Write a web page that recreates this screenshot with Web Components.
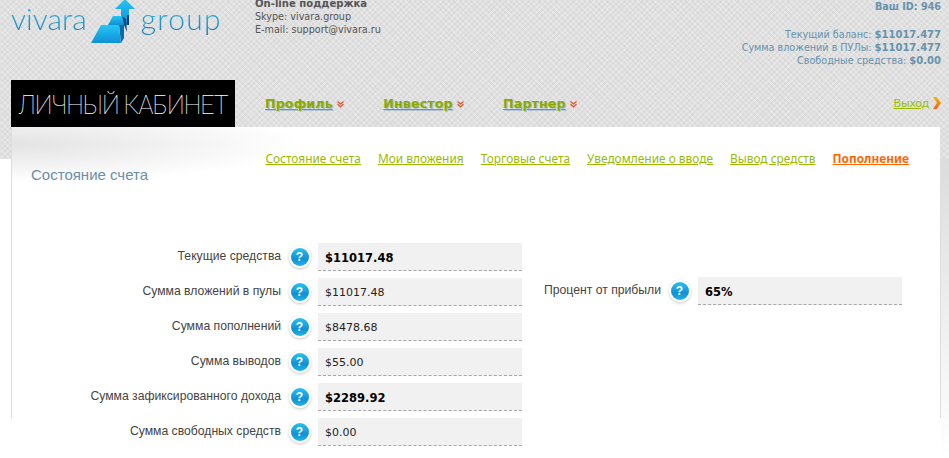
<!DOCTYPE html>
<html lang="ru">
<head>
<meta charset="utf-8">
<title>Vivara Group</title>
<style>
    html, body { margin: 0; background: #ffffff; height: 100%; overflow: hidden; }
</style>
</head>
<body>
<vivara-page>
    <vivara-header></vivara-header>
    <vivara-card>
        <stat-row slot="left" label="Текущие средства" value="$11017.48" strong></stat-row>
        <stat-row slot="left" label="Сумма вложений в пулы" value="$11017.48"></stat-row>
        <stat-row slot="left" label="Сумма пополнений" value="$8478.68"></stat-row>
        <stat-row slot="left" label="Сумма выводов" value="$55.00"></stat-row>
        <stat-row slot="left" label="Сумма зафиксированного дохода" value="$2289.92" strong></stat-row>
        <stat-row slot="left" label="Сумма свободных средств" value="$0.00"></stat-row>
        <stat-row slot="right" label="Процент от прибыли" value="65%" strong></stat-row>
    </vivara-card>
</vivara-page>

<script>
const chevronDown = `
    <svg width="7" height="7" viewBox="0 0 7 7">
        <path d="M0.5 0.5 L3.5 3 L6.5 0.5 M0.5 3 L3.5 6 L6.5 3" fill="none" stroke="#e8522a" stroke-width="1.2"/>
    </svg>`;

class VivaraPage extends HTMLElement {
    constructor() {
        super();
        this.attachShadow({ mode: 'open' });
        this.shadowRoot.innerHTML = `
            <style>
                :host {
                    display: block;
                    width: 949px;
                    height: 458px;
                    overflow: hidden;
                    background: linear-gradient(#dcdcdc, #ffffff) no-repeat right 0 top 159px / 8px 299px;
                }
            </style>
            <slot></slot>
        `;
    }
}

class VivaraHeader extends HTMLElement {
    constructor() {
        super();
        this.attachShadow({ mode: 'open' });
        this.shadowRoot.innerHTML = `
            <style>
                :host {
                    display: block;
                    height: 159px;
                    background-color: #e7e7e7;
                    background-image:
                        repeating-linear-gradient(45deg, rgba(0,0,0,0.03) 0 2px, transparent 2px 4px),
                        repeating-linear-gradient(-45deg, rgba(0,0,0,0.03) 0 2px, transparent 2px 4px);
                }
                .top {
                    display: flex;
                    height: 80px;
                    padding: 0 8px 0 11px;
                }
                .logo {
                    display: flex;
                    width: 244px;
                    height: 46px;
                    font: 300 30px/36px Lato, sans-serif;
                }
                .logo span {
                    display: block;
                    height: 46px;
                    background: linear-gradient(#1fb7ea 20%, #1a78b4 75%);
                    -webkit-background-clip: text;
                    background-clip: text;
                    color: transparent;
                }
                .logo span + svg + span { letter-spacing: 1.2px; }
                .logo svg { margin: 0 0 0 2px; flex: none; }
                .support {
                    font: 10.7px/13px "DejaVu Sans Condensed", "DejaVu Sans", sans-serif;
                    font-stretch: condensed;
                    color: #555555;
                    margin-top: -3px;
                }
                .support b { display: block; font-size: 11.2px; }
                .balance {
                    margin-left: auto;
                    text-align: right;
                    font: 10.7px/13px "DejaVu Sans Condensed", "DejaVu Sans", sans-serif;
                    font-stretch: condensed;
                    color: #6593ad;
                }
                .balance b { font: bold 10px/13px "DejaVu Sans", sans-serif; }
                .balance .id { margin-bottom: 15px; }
                .balance .id b { font-size: 9.6px; }
                .nav {
                    display: flex;
                    align-items: center;
                    height: 47px;
                    padding: 0 8px 0 11px;
                }
                .cabinet {
                    width: 224px;
                    height: 47px;
                    background: #000000;
                    color: #ffffff;
                    font: 100 25px/51px Roboto, sans-serif;
                    letter-spacing: -1px;
                    text-align: center;
                    white-space: nowrap;
                }
                .menu { display: flex; gap: 39.5px; margin-left: 30px; }
                .menu a {
                    font: bold 12.8px/18px "DejaVu Sans", sans-serif;
                    color: #8aa800;
                    text-shadow: 1px 1px 0 rgba(90,140,180,0.35);
                    text-decoration: underline;
                }
                .menu svg { margin: 2px 0 0 4px; }
                .menu span { display: flex; align-items: center; }
                .logout {
                    margin-left: auto;
                    margin-top: -2px;
                    display: flex;
                    align-items: center;
                    gap: 4px;
                    font: 11.5px/14px "Noto Sans", sans-serif;
                }
                .logout a { color: #99bb00; text-decoration: underline; }
            </style>
            <div class="top">
                <div class="logo">
                    <span>vivara</span>
                    <svg width="52" height="46" viewBox="88 0 52 46">
                        <defs>
                            <linearGradient id="g" x1="0" y1="0" x2="0" y2="1">
                                <stop offset="0" stop-color="#25c6f5"/>
                                <stop offset="1" stop-color="#0e90d6"/>
                            </linearGradient>
                        </defs>
                        <path d="M124 -1 L134 9 L128 9 L128 25 L120 25 L120 9 L114 9 Z" fill="url(#g)"/>
                        <path d="M126 15 L128 15 L128 25 L126 25 Z" fill="#0b3f73"/>
                        <path d="M121 16 L125 19 L126 32 L123 25 Z" fill="#0c4a80"/>
                        <path d="M112 16 L121 16 L123 25 L107 25 Z" fill="url(#g)"/>
                        <path d="M118 25 L123 25 L123 38 L120 43 Z" fill="#0b6aa8"/>
                        <path d="M100 25 L118 25 L120 43 L90 43 Z" fill="url(#g)"/>
                    </svg>
                    <span>group</span>
                </div>
                <div class="support">
                    <b>On-line поддержка</b>
                    Skype: vivara.group<br>
                    E-mail: support@vivara.ru
                </div>
                <div class="balance">
                    <div class="id"><b>Ваш ID: 946</b></div>
                    Текущий баланс: <b>$11017.477</b><br>
                    Сумма вложений в ПУЛы: <b>$11017.477</b><br>
                    Свободные средства: <b>$0.00</b>
                </div>
            </div>
            <div class="nav">
                <div class="cabinet">ЛИЧНЫЙ КАБИНЕТ</div>
                <div class="menu">
                    <span><a>Профиль</a>${chevronDown}</span>
                    <span><a>Инвестор</a>${chevronDown}</span>
                    <span><a>Партнер</a>${chevronDown}</span>
                </div>
                <div class="logout">
                    <a>Выход</a>
                    <svg width="8" height="12" viewBox="0 0 8 12">
                        <defs>
                            <linearGradient id="o" x1="0" y1="0" x2="0" y2="1">
                                <stop offset="0" stop-color="#f5b800"/>
                                <stop offset="1" stop-color="#ff5a10"/>
                            </linearGradient>
                        </defs>
                        <path d="M0 0 L3.5 0 L8 6 L3.5 12 L0 12 L4 6 Z" fill="url(#o)"/>
                    </svg>
                </div>
            </div>
        `;
    }
}

class VivaraCard extends HTMLElement {
    constructor() {
        super();
        this.attachShadow({ mode: 'open' });
        this.shadowRoot.innerHTML = `
            <style>
                :host {
                    display: block;
                    box-sizing: border-box;
                    position: relative;
                    width: 930px;
                    height: 291px;
                    margin: -32px 0 0 11px;
                    border-left: 1px solid #dedede;
                    border-right: 1px solid #dedede;
                    background:
                        radial-gradient(ellipse 290px 38px at 0 17px, #e3e3e3, rgba(255,255,255,0)),
                        #ffffff;
                }
                .head {
                    display: flex;
                    justify-content: space-between;
                    height: 116px;
                    padding: 0 31px 0 19px;
                }
                h1 {
                    margin: 39px 0 0;
                    font: 15px/18px "Liberation Sans", sans-serif;
                    color: #6a8fa8;
                }
                nav {
                    display: flex;
                    gap: 17px;
                    margin-top: 23px;
                    height: 16px;
                    font: 11.9px/16px "Noto Sans", sans-serif;
                }
                nav a { color: #99bb00; text-decoration: underline; white-space: nowrap; }
                nav a.on { color: #ff6600; font-weight: bold; }
                .cols { display: flex; }
                .left { display: flex; flex-direction: column; gap: 7px; width: 510px; --label: 269px; }
                .right { display: flex; flex-direction: column; margin-top: 34px; --label: 139px; }
            </style>
            <div class="head">
                <h1>Состояние счета</h1>
                <nav>
                    <a>Состояние счета</a>
                    <a>Мои вложения</a>
                    <a>Торговые счета</a>
                    <a>Уведомление о вводе</a>
                    <a>Вывод средств</a>
                    <a class="on">Пополнение</a>
                </nav>
            </div>
            <div class="cols">
                <div class="left"><slot name="left"></slot></div>
                <div class="right"><slot name="right"></slot></div>
            </div>
        `;
    }
}

class StatRow extends HTMLElement {
    constructor() {
        super();
        this.attachShadow({ mode: 'open' });
    }

    connectedCallback() {
        const label = this.getAttribute('label');
        const value = this.getAttribute('value');
        const strong = this.hasAttribute('strong');
        this.shadowRoot.innerHTML = `
            <style>
                :host {
                    display: grid;
                    grid-template-columns: var(--label) 37px 204px;
                    align-items: center;
                    height: 28px;
                }
                .label {
                    text-align: right;
                    font: 12.2px/14px "Liberation Sans", sans-serif;
                    color: #444444;
                    margin-top: -3px;
                    white-space: nowrap;
                }
                .help {
                    justify-self: center;
                    box-sizing: border-box;
                    width: 18px;
                    height: 18px;
                    margin-top: -1px;
                    border-radius: 50%;
                    background: linear-gradient(#27c3f2 0%, #1596d8 55%, #0f8fd2 60%, #22b4e6 100%);
                    box-shadow: 0 0 0 2px #ffffff, 0 1px 3px 2px rgba(0,0,0,0.22);
                    color: #ffffff;
                    font: bold 12px/18px "Liberation Sans", sans-serif;
                    text-align: center;
                }
                .value {
                    box-sizing: border-box;
                    height: 28px;
                    padding: 0 7px;
                    background: #f1f1f1;
                    border-bottom: 1px dashed #a8a8a8;
                    color: #222222;
                    font: 11px/30px "DejaVu Sans", sans-serif;
                }
                .value.strong { font-weight: bold; font-size: 11.5px; color: #000000; }
            </style>
            <div class="label">${label}</div>
            <div class="help">?</div>
            <div class="value${strong ? ' strong' : ''}">${value}</div>
        `;
    }
}

customElements.define('vivara-page', VivaraPage);
customElements.define('vivara-header', VivaraHeader);
customElements.define('vivara-card', VivaraCard);
customElements.define('stat-row', StatRow);
</script>
</body>
</html>
